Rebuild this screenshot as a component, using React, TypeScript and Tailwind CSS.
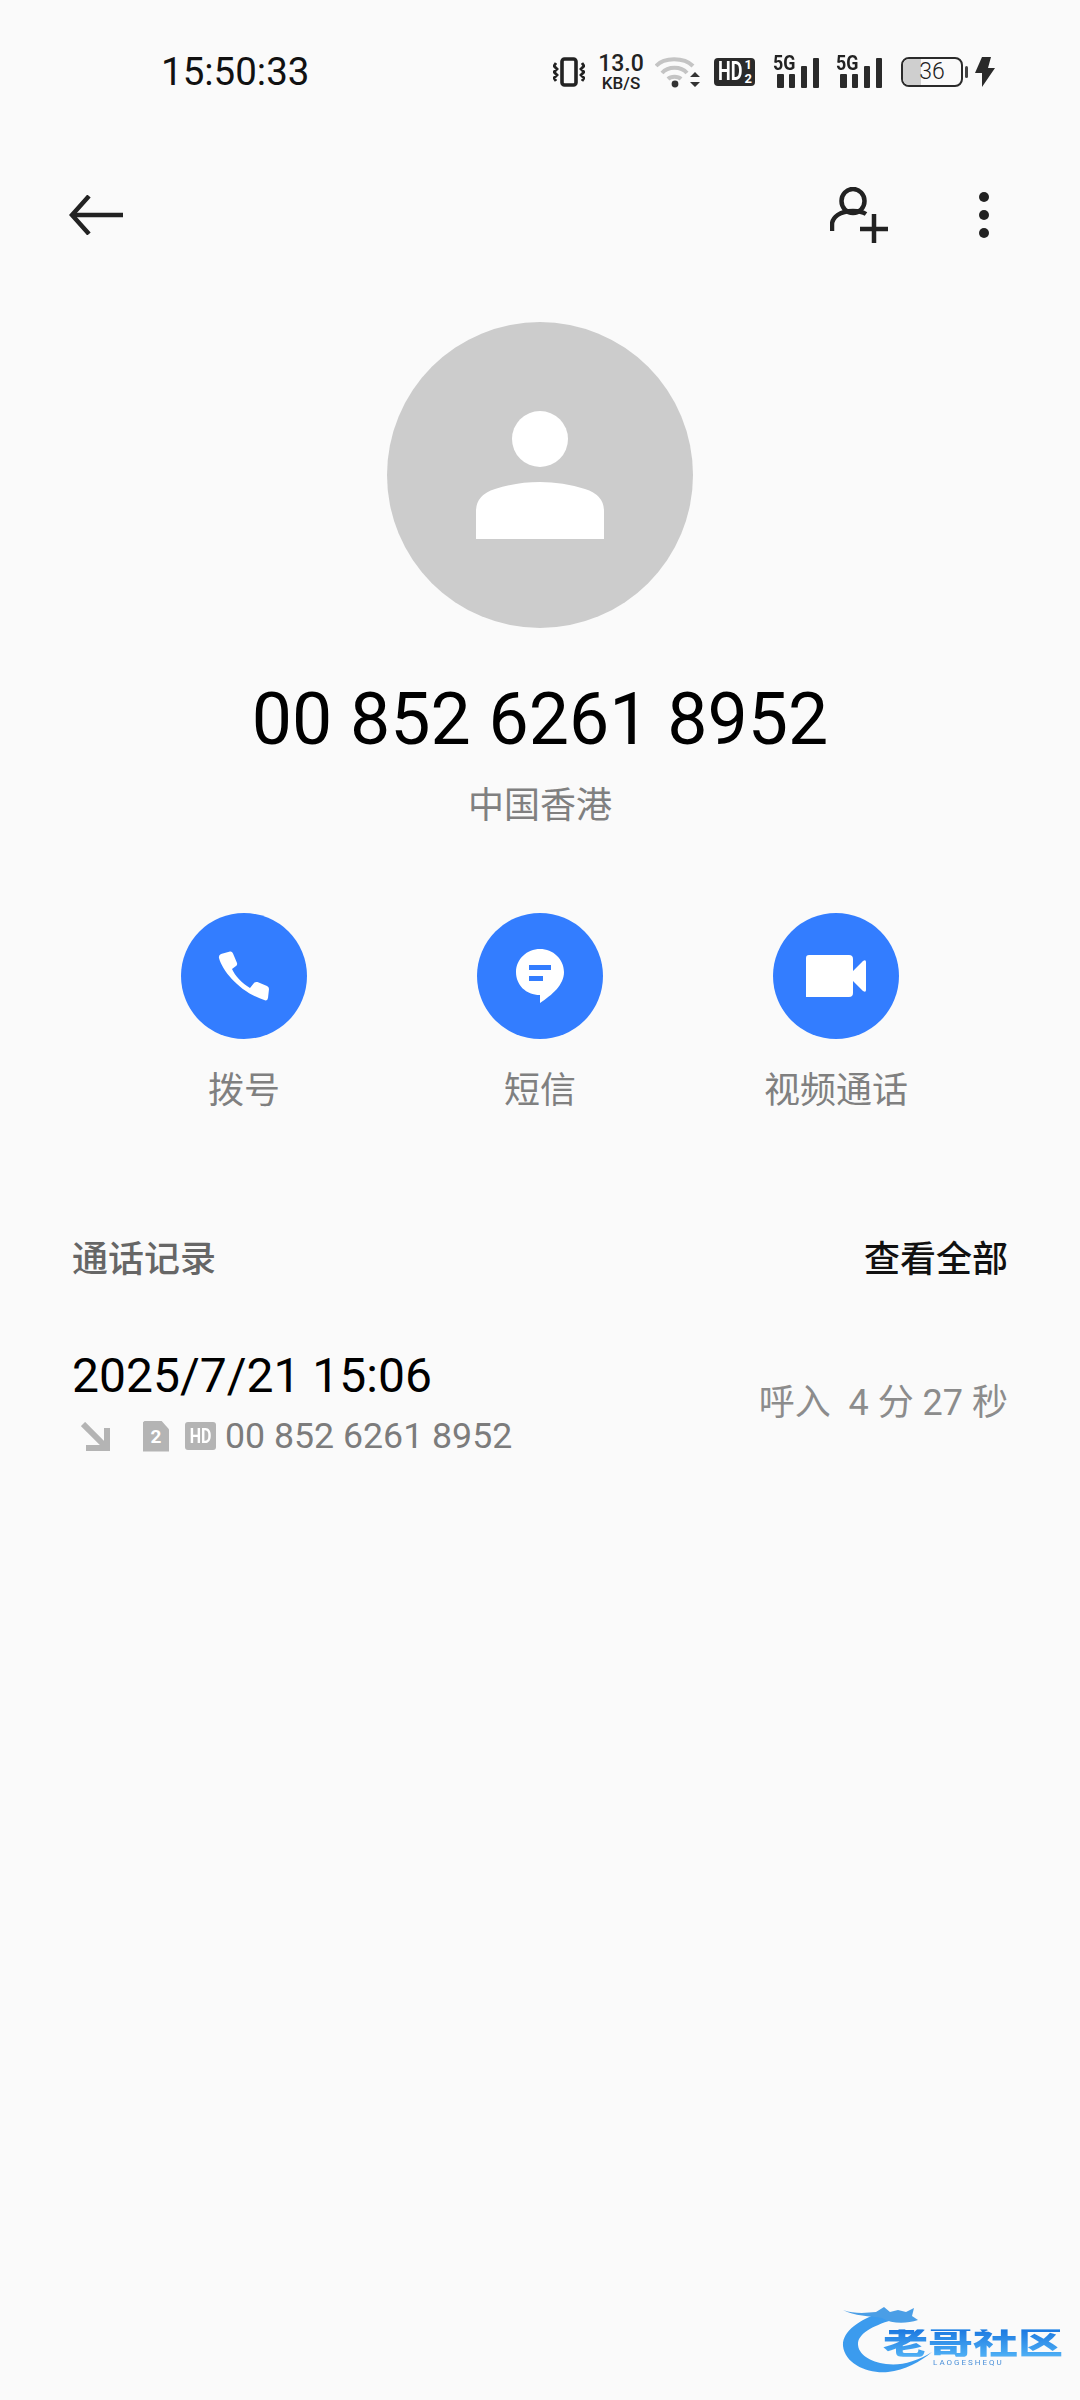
import React from 'react';

const FONT = 'font-["Roboto","Noto_Sans_CJK_SC",sans-serif]';

const SignalIcon = () => (
  <div className="relative w-[46px] h-[32px]">
    <span className="absolute left-0 top-[-3px] origin-left scale-x-[0.85] text-[21px] leading-[20px] font-bold text-[#222]">5G</span>
    <svg width="46" height="30" viewBox="0 0 46 30" fill="#2a2a2a" className="absolute left-0 top-[2px]">
      <rect x="4" y="16" width="7" height="14" rx="1" />
      <rect x="16" y="16" width="6" height="14" rx="1" />
      <rect x="28" y="8" width="6" height="22" rx="1" />
      <rect x="40" y="0" width="6" height="30" rx="1" />
    </svg>
  </div>
);

const StatusIcons = () => (
  <div className="flex items-center text-[#222]">
    <svg width="32" height="30" viewBox="0 0 32 30" fill="none" stroke="#222" className="mr-[13px]">
      <rect x="9" y="2" width="14" height="26" rx="2.5" strokeWidth="3.6" />
      <path d="M3 6l-2 3 3 3-3 3 3 3-3 3 2 3M29 6l2 3-3 3 3 3-3 3 3 3-2 3" strokeWidth="2.8" />
    </svg>
    <div className="flex flex-col items-center w-[46px] mr-[11px]">
      <span className="text-[23px] leading-[22px] font-medium">13.0</span>
      <span className="text-[17px] leading-[17px] font-medium">KB/S</span>
    </div>
    <svg width="46" height="34" viewBox="0 0 46 34" fill="none" stroke="#c4c4c4" strokeWidth="4" className="mr-[13px]">
      <path d="M1 11C9 2 29 2 38 11" />
      <path d="M7 18C13 11 26 11 32 18" />
      <path d="M13 24C16 21 23 21 26 24" />
      <circle cx="20" cy="29" r="3.4" fill="#333" stroke="none" />
      <path d="M35 22l5-5 5 5zM35 27l5 5 5-5z" fill="#333" stroke="none" />
    </svg>
    <div className="relative w-[41px] h-[28px] rounded-[4px] bg-[#2a2a2a] mr-[18px] text-white font-bold">
      <span className="absolute left-[4px] top-[2px] origin-left scale-x-[0.72] text-[25px] leading-[24px]">HD</span>
      <span className="absolute right-[3px] top-[0px] text-[13px] leading-[14px]">1</span>
      <span className="absolute right-[3px] top-[14px] text-[13px] leading-[14px]">2</span>
    </div>
    <div className="mr-[17px]"><SignalIcon /></div>
    <div className="mr-[19px]"><SignalIcon /></div>
    <div className="relative w-[67px] h-[30px] mr-[7px]">
      <div className="absolute left-0 top-0 w-[62px] h-[30px] rounded-[8px] border-[2px] border-[#2a2a2a] overflow-hidden">
        <div className="w-[18px] h-full bg-[#cfcfcf]" />
      </div>
      <div className="absolute right-0 top-[9px] w-[3px] h-[12px] rounded-[2px] bg-[#444]" />
      <span className="absolute left-0 w-[62px] top-0 text-center text-[23px] leading-[30px] font-light text-[#222]">36</span>
    </div>
    <svg width="20" height="30" viewBox="0 0 20 30" fill="#2a2a2a">
      <path d="M7 0L0 16H7L7 30L20 11H13L16 0Z" />
    </svg>
  </div>
);

const ArrowBack = () => (
  <svg width="54" height="40" viewBox="0 0 54 40" fill="none" stroke="#222" strokeWidth="4.5">
    <path d="M54 20H3" />
    <path d="M20 1L3 20L20 39" strokeLinejoin="miter" />
  </svg>
);

const AddContact = () => (
  <svg width="58" height="56" viewBox="0 0 58 56" fill="none" stroke="#222" strokeWidth="4.5">
    <ellipse cx="23" cy="14" rx="11.5" ry="12" />
    <path d="M2 44V38C2 30 10 24 23 24C28 24 33 25 36 27" />
    <path d="M44 27V56M30 42H58" />
  </svg>
);

const PhoneGlyph = () => (
  <svg width="52" height="50" viewBox="0 0 52 50" fill="white">
    <path d="M3 3L12 .5q2-.5 3 2L19 12q.5 2-1 3L14 18C17 25 24 32 32 37L36 32q1.5-1.5 3.5-1L49 35q2 1 2 3L50 47q-.5 2.5-2.5 2.5C25 43 5 22 1 7q-.5-3 2-4z" />
  </svg>
);

const MessageGlyph = () => (
  <svg width="48" height="54" viewBox="0 0 48 54" fill="white">
    <path d="M24 0C37 0 48 10 48 23C48 36 36 46 24 54L24 46C10 46 0 36 0 23C0 10 11 0 24 0Z" />
    <rect x="13" y="16" width="22" height="5" fill="#337dff" />
    <rect x="13" y="27" width="14" height="5" fill="#337dff" />
  </svg>
);

const VideoGlyph = () => (
  <svg width="60" height="42" viewBox="0 0 60 42" fill="white">
    <path d="M0 3q0-3 3-3H43q4 0 4 4V16L57 6q3-2 3 1V35q0 3-3 1L47 26V38q0 4-4 4H0z" />
  </svg>
);

const actions = [
  { label: '拨号', icon: <PhoneGlyph /> },
  { label: '短信', icon: <MessageGlyph /> },
  { label: '视频通话', icon: <VideoGlyph /> },
];

const IncomingArrow = () => (
  <svg width="29" height="29" viewBox="0 0 29 29" fill="none" stroke="#b4b4b4" strokeWidth="6">
    <path d="M2 2L26 26" />
    <path d="M26 6V26H5" />
  </svg>
);

const SimBadge = () => (
  <div className="w-[26px] h-[31px] bg-[#b4b4b4] [clip-path:polygon(8%_0,70%_0,100%_28%,100%_100%,0_100%,0_6%)] flex items-center justify-center">
    <span className="text-white text-[19px] font-bold leading-none">2</span>
  </div>
);

const HdBadge = () => (
  <div className="w-[31px] h-[28px] bg-[#b4b4b4] rounded-[3px] flex items-center justify-center">
    <span className="text-white text-[20px] font-bold leading-none scale-x-[0.8]">HD</span>
  </div>
);

const logoChars = ['老', '哥', '社', '区'];

// 社区水印
const Watermark = () => (
  <div className="absolute left-[840px] top-[2302px] w-[230px] h-[80px] blur-[0.7px]">
    <svg width="110" height="74" viewBox="0 0 110 74" className="absolute left-0 top-0">
      <path d="M42 10C18 18 2 30 3 44C5 62 28 72 48 70C65 68 80 60 92 50C76 60 60 64 46 62C30 60 18 52 18 42C18 32 32 24 52 18Z" fill="#3b9bee" />
      <path d="M3 8C14 12 26 11 36 10L44 5L50 10L58 8L66 10L74 6L72 14L78 18C66 22 52 22 42 16C30 14 14 14 3 8Z" fill="#4a9ee6" />
    </svg>
    <div className="absolute left-[43px] top-[22px] w-[180px] h-[38px] flex items-center justify-between text-[45px] leading-[38px] font-black scale-y-[0.72]">
      {logoChars.map((ch) => (
        <span key={ch} className="bg-gradient-to-b from-[#1c78e0] to-[#4fb0f5] bg-clip-text text-transparent">{ch}</span>
      ))}
    </div>
    <div className="absolute left-[93px] top-[56px] text-[8px] leading-[10px] tracking-[2px] text-[#4a90d9]">LAOGESHEQU</div>
  </div>
);

const App = () => {
  return (
    <div className={`relative w-[1080px] h-[2400px] overflow-hidden bg-[#fafafa] ${FONT}`}>
      <div className="h-[144px] pl-[161px] pr-[85px] flex items-center justify-between">
        <span className="text-[38.5px] text-[#111]">15:50:33</span>
        <StatusIcons />
      </div>

      <div className="h-[142px] pl-[69px] pr-[91px] flex items-center justify-between">
        <ArrowBack />
        <div className="flex items-center gap-[91px]">
          <AddContact />
          <div className="flex flex-col gap-[8px]">
            <span className="w-[10px] h-[10px] rounded-full bg-[#222]" />
            <span className="w-[10px] h-[10px] rounded-full bg-[#222]" />
            <span className="w-[10px] h-[10px] rounded-full bg-[#222]" />
          </div>
        </div>
      </div>

      <div className="mt-[36px] mx-auto w-[306px] h-[306px] rounded-full bg-[#cccccc] flex items-center justify-center">
        <svg width="128" height="128" viewBox="0 0 128 128" fill="white">
          <circle cx="64" cy="28" r="28" />
          <path d="M0 128V100Q0 84 19 78Q41 71 64 71Q87 71 109 78Q128 84 128 100V128Z" />
        </svg>
      </div>

      <div className="mt-[50px] text-center text-[71.6px] leading-[84px] text-black">00 852 6261 8952</div>
      <div className="mt-[20px] text-center text-[36px] leading-[48px] text-[#808080]">中国香港</div>

      <div className="mt-[83px] px-[96px] grid grid-cols-3">
        {actions.map((action) => (
          <div key={action.label} className="flex flex-col items-center">
            <div className="w-[126px] h-[126px] rounded-full bg-[#337dff] flex items-center justify-center">
              {action.icon}
            </div>
            <span className="mt-[28px] text-[36px] leading-[48px] text-[#808080]">{action.label}</span>
          </div>
        ))}
      </div>

      <div className="mt-[121px] px-[72px] flex items-center justify-between text-[36px] leading-[48px] font-medium">
        <span className="text-[#666666]">通话记录</span>
        <span className="text-[#111111]">查看全部</span>
      </div>

      <div className="mt-[64px] px-[72px] flex items-center justify-between">
        <div className="flex flex-col">
          <span className="text-[48px] leading-[56px] text-black">2025/7/21 15:06</span>
          <div className="mt-[10px] h-[44px] pl-[9px] flex items-center">
            <IncomingArrow />
            <div className="ml-[33px]"><SimBadge /></div>
            <div className="ml-[16px]"><HdBadge /></div>
            <span className="ml-[9px] text-[35.7px] leading-[44px] text-[#7c7c7c]">00 852 6261 8952</span>
          </div>
        </div>
        <span className="text-[36px] leading-[48px] text-[#8c8c8c] whitespace-pre">呼入  4 分 27 秒</span>
      </div>

      <Watermark />
    </div>
  );
};

export default App;
